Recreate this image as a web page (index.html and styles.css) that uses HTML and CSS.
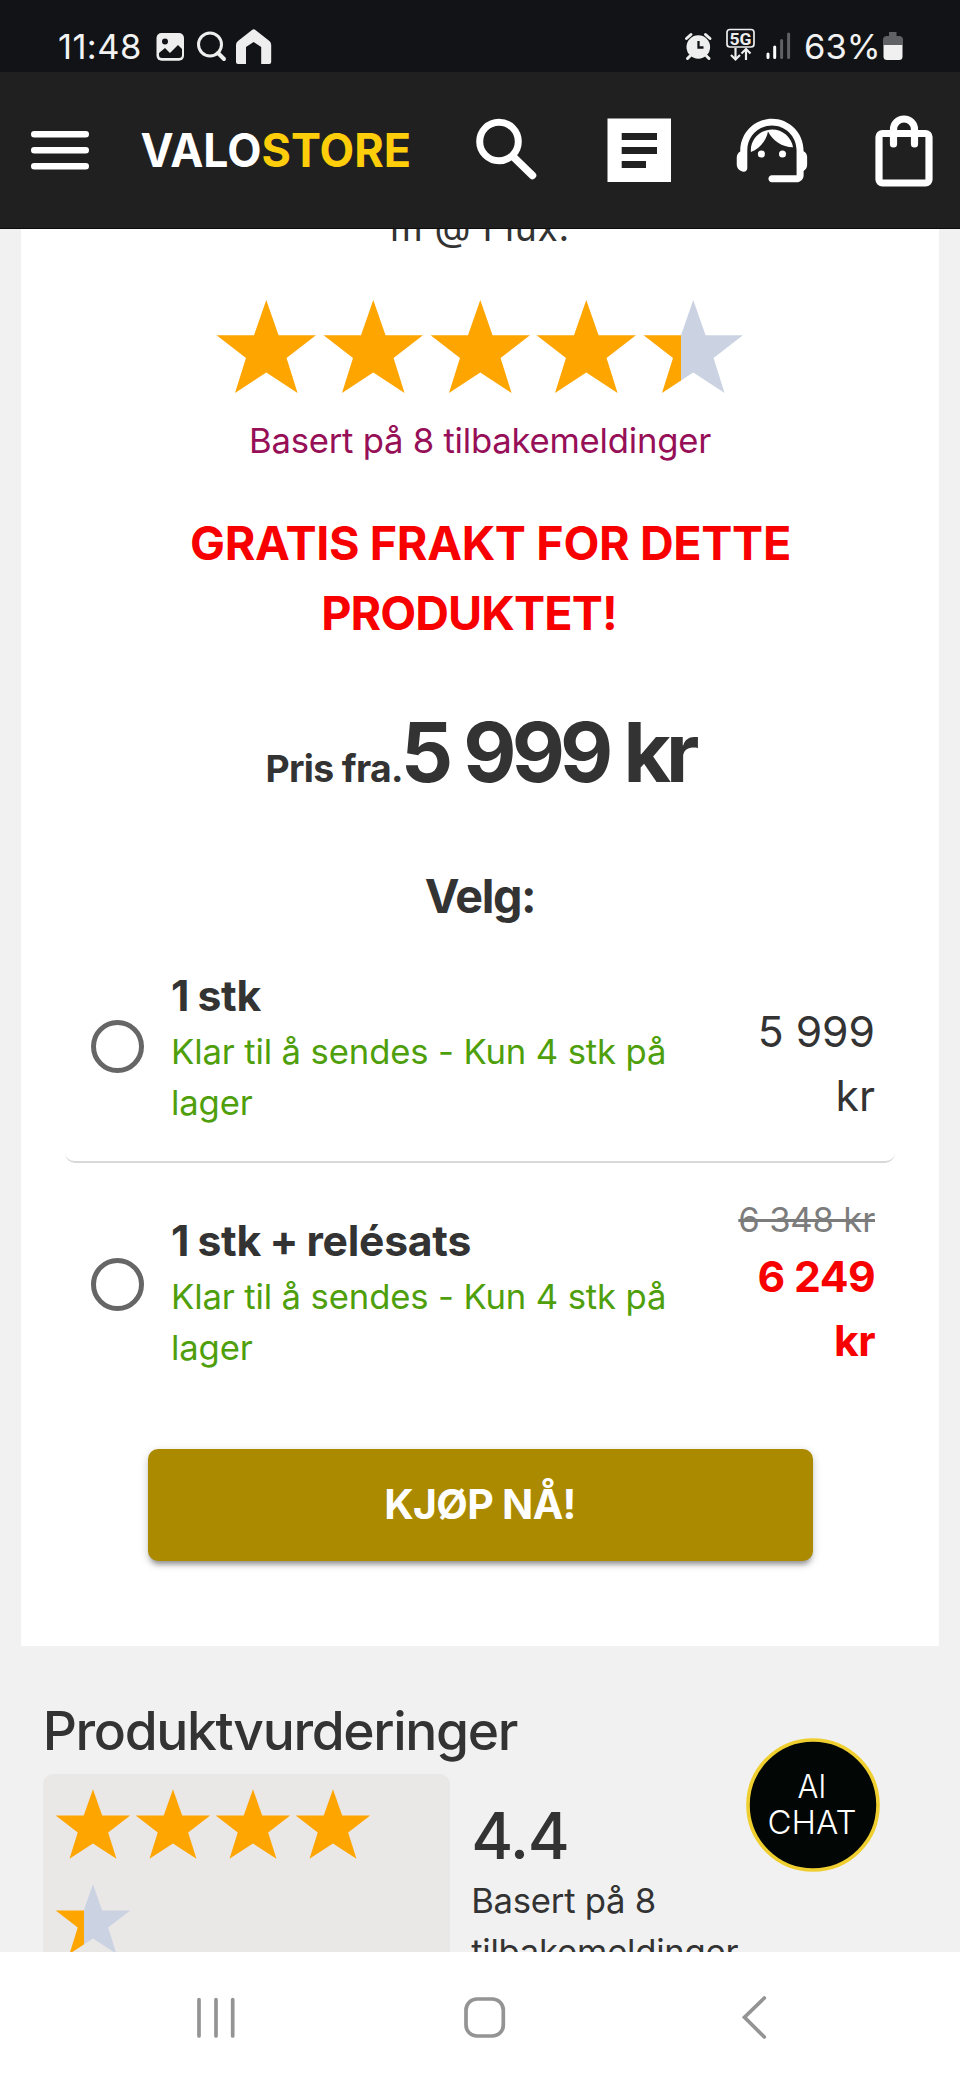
FILE: index.html
```html
<!DOCTYPE html>
<html lang="no">
<head>
<meta charset="utf-8">
<title>Valostore</title>
<link rel="stylesheet" href="styles.css">
</head>
<body>
<svg width="0" height="0" class="defs">
  <defs>
    <path id="star" d="M53.3 0L65.6 35.3H103L73.6 58L84.6 93L53.3 72.5L22 93L33 58L3.6 35.3H41z"/>
    <linearGradient id="partial" gradientUnits="userSpaceOnUse" x1="0" y1="0" x2="106.7" y2="0">
      <stop offset=".385" stop-color="#ffa500"/><stop offset=".385" stop-color="#cbd3e3"/>
    </linearGradient>
  </defs>
</svg>
<div class="screen">
  <div class="status">
    <span class="clock">11:48</span>
    <svg class="status-left" width="120" height="72" viewBox="154 0 120 72">
      <rect x="156.500" y="33" width="27.500" height="27.700" rx="5" fill="#eee"/>
      <circle cx="165" cy="41.500" r="3" fill="#111317"/>
      <path d="M159 53l6-5 5 5 8-8 4 4v6q0 3-3 3h-17q-3 0-3-3z" fill="#111317"/>
      <circle cx="210" cy="44.500" r="11.500" fill="none" stroke="#eee" stroke-width="3"/>
      <path d="M218 53l6 6" stroke="#eee" stroke-width="4" stroke-linecap="round"/>
      <path d="M238 41l14-11q1.700-1.300 3.400 0l14 11q1.800 1.500 1.800 4v17q0 2-2 2h-8V47l-7.600-5-7.600 5v17h-8q-2 0-2-2V45q0-2.500 2-4z" fill="#eee"/>
    </svg>
    <svg class="status-right" width="115" height="72" viewBox="680 0 115 72">
      <circle cx="698.300" cy="47" r="11.800" fill="#eee"/>
      <path d="M686.500 38.500l4.500-4M710 38.500l-4.500-4M690 56l-2.500 2.500M706.500 56l2.500 2.500" stroke="#eee" stroke-width="3" stroke-linecap="round"/>
      <path d="M698.500 41v6.500h5" fill="none" stroke="#111317" stroke-width="2.300"/>
      <rect x="727" y="29.500" width="27" height="17.500" rx="3" fill="none" stroke="#eee" stroke-width="1.700"/>
      <text x="740.500" y="44.500" class="net" text-anchor="middle" textLength="22" lengthAdjust="spacingAndGlyphs">5G</text>
      <path d="M735.500 48v11.500m-4.500-4.500l4.500 4.500 4.500-4.500M746 60V49m-4.500 4.500L746 49l4.500 4.500" fill="none" stroke="#eee" stroke-width="2.200"/>
      <path d="M768 54v3.500M774.700 47v10.500" stroke="#fff" stroke-width="3" stroke-linecap="round"/>
      <path d="M781.600 40.500v17M788.600 34v23.500" stroke="#606164" stroke-width="3" stroke-linecap="round"/>
    </svg>
    <span class="percent">63%</span>
    <svg class="battery" width="20" height="72" viewBox="883 0 20 72">
      <path d="M889 32h7.500v4h2.500q4 0 4 4v5h-20v-5q0-4 4-4h2z" fill="#606164"/>
      <path d="M883.500 45h19v11.500q0 3.500-3.500 3.500h-12q-3.500 0-3.500-3.500z" fill="#f0f0f0"/>
    </svg>
  </div>
  <div class="header">
    <svg class="menu" width="58" height="157" viewBox="31 72 58 157"><path d="M34.300 134.300h51.400M34.300 150.200h51.400M34.300 166.200h51.400" stroke="#fff" stroke-width="6.600" stroke-linecap="round"/></svg>
    <svg class="logo" width="272" height="157" viewBox="140 72 272 157">
      <text x="140.500" y="167" textLength="121" lengthAdjust="spacingAndGlyphs" fill="#fff">VALO</text>
      <text x="261.500" y="167" textLength="149.500" lengthAdjust="spacingAndGlyphs" fill="#ffce0a">STORE</text>
    </svg>
    <svg class="search" width="62" height="157" viewBox="475 72 62 157" fill="none" stroke="#fff"><circle cx="499" cy="141.500" r="19.300" stroke-width="7"/><path d="M513.500 157l19 18.500" stroke-width="7.500" stroke-linecap="round"/></svg>
    <svg class="doc" width="64" height="157" viewBox="607 72 64 157"><path fill="#fff" d="M607.500 118.500h63.500v63.500h-63.500z"/><path fill="#202020" d="M621.700 133h35.300v7h-35.300zM621.700 147h35.300v7h-35.300zM621.700 161h24.300v7h-24.300z"/></svg>
    <svg class="agent" width="72" height="157" viewBox="736 72 72 157">
      <g transform="translate(729.700 108.300) scale(3.520)" fill="#fff">
        <path d="M21 12.220C21 6.730 16.740 3 12 3c-4.690 0-9 3.650-9 9.280-.6.34-1 .98-1 1.720v2c0 1.100.9 2 2 2 .55 0 1-.45 1-1v-5.100c0-3.870 3.130-7 7-7s7 3.130 7 7V19h-7c-.55 0-1 .45-1 1s.45 1 1 1h7c1.100 0 2-.9 2-2v-1.220c.59-.31 1-.92 1-1.640v-2.300c0-.7-.41-1.310-1-1.620z"/>
        <circle cx="9" cy="13" r="1"/><circle cx="15" cy="13" r="1"/>
        <path d="M18 11.030C17.520 8.180 15.040 6 12.050 6c-3.030 0-6.290 2.510-6.030 6.450 2.470-1.010 4.330-3.210 4.860-5.890 1.310 2.630 4 4.440 7.120 4.470z"/>
      </g>
    </svg>
    <svg class="bag" width="58" height="157" viewBox="875 72 58 157" fill="none" stroke="#fff" stroke-width="7.200"><rect x="879" y="133.500" width="50" height="49.500" rx="3.500"/><path d="M893.500 144v-14.500a10.500 10.500 0 0 1 21 0V144" stroke-linecap="round"/></svg>
  </div>
  <div class="content">
    <div class="card">
      <div class="flux">m @ Flux.</div>
      <div class="stars">
        <svg viewBox="0 0 106.700 93"><use href="#star"/></svg><svg viewBox="0 0 106.700 93"><use href="#star"/></svg><svg viewBox="0 0 106.700 93"><use href="#star"/></svg><svg viewBox="0 0 106.700 93"><use href="#star"/></svg><svg viewBox="0 0 106.700 93" class="part"><use href="#star"/></svg>
      </div>
      <div class="based">Basert på 8 tilbakemeldinger</div>
      <div class="promo"><div class="promo-first">GRATIS FRAKT FOR DETTE</div><div class="promo-second">PRODUKTET!</div></div>
      <div class="price"><span class="from">Pris fra.</span><span class="amount">5 999 kr</span></div>
      <div class="choose">Velg:</div>
      <div class="option first">
        <span class="radio"></span>
        <div class="info"><div class="name">1 stk</div><div class="stock">Klar til å sendes - Kun 4 stk på lager</div></div>
        <div class="cost">5 999<br>kr</div>
      </div>
      <div class="option second">
        <span class="radio"></span>
        <div class="info"><div class="name">1 stk + relésats</div><div class="stock">Klar til å sendes - Kun 4 stk på lager</div></div>
        <div class="cost sale"><s>6 348 kr</s>6 249<br>kr</div>
      </div>
      <div class="buy">KJØP NÅ!</div>
    </div>
    <div class="reviews">
      <div class="title">Produktvurderinger</div>
      <div class="summary">
        <div class="box">
          <svg viewBox="0 0 106.700 93"><use href="#star"/></svg><svg viewBox="0 0 106.700 93"><use href="#star"/></svg><svg viewBox="0 0 106.700 93"><use href="#star"/></svg><svg viewBox="0 0 106.700 93"><use href="#star"/></svg><svg viewBox="0 0 106.700 93" class="part"><use href="#star"/></svg>
        </div>
        <div class="score"><div class="number">4.4</div><div class="count">Basert på 8<br>tilbakemeldinger</div></div>
      </div>
    </div>
    <div class="chat">
      <svg width="134" height="134" viewBox="746 1738 134 134">
        <circle cx="813" cy="1805" r="65" fill="#020706" stroke="#efce30" stroke-width="3.600"/>
        <text x="797.500" y="1797.500" textLength="29" lengthAdjust="spacingAndGlyphs">AI</text>
        <text x="767.500" y="1833.500" textLength="89" lengthAdjust="spacingAndGlyphs">CHAT</text>
      </svg>
    </div>
  </div>
  <div class="nav">
    <svg class="recents" width="42" height="128" viewBox="195 1952 42 128"><path d="M199 1999.500v36.500M216 1999.500v36.500M232.700 1999.500v36.500"/></svg>
    <svg class="home" width="44" height="128" viewBox="463 1952 44 128"><rect x="466" y="1999" width="37.300" height="37" rx="11"/></svg>
    <svg class="back" width="28" height="128" viewBox="740 1952 28 128"><path d="M764.300 1998l-19.800 19.300 19.800 19.700"/></svg>
  </div>
</div>
</body>
</html>
```
FILE: styles.css
```css
* { box-sizing: border-box; }
body { margin: 0; font-family: Inter, sans-serif; color: #333; }
svg { display: block; flex: none; }
.defs { position: absolute; }
.screen { width: 960px; height: 2080px; display: flex; flex-direction: column; overflow: hidden; background: #f1f1f1; }

.status { flex: none; height: 72px; background: #111317; color: #f2f2f2; display: flex; font-size: 34.5px; line-height: 93px; padding-left: 58px; }
.clock { width: 96px; letter-spacing: 0.4px; }
.status-right { margin-left: 406px; }
.percent { margin-left: 9px; width: 79px; }
.net { font: 700 16.500px Roboto, sans-serif; fill: #eee; }

.header { flex: none; height: 157px; background: #202020; display: flex; padding-left: 31px; border-bottom: 1px solid #0c0c0c; }
.logo { margin-left: 51px; overflow: visible; }
.logo text { font-weight: 700; font-size: 46px; }
.search { margin-left: 63px; }
.doc { margin-left: 70px; }
.agent { margin-left: 65px; }
.bag { margin-left: 67px; }

.content { flex: 1; min-height: 0; overflow: hidden; position: relative; }
.card { margin: 0 21.300px; height: 1417px; background: #fff; text-align: center; display: flow-root; }
.flux { margin-top: -29px; font-size: 37.330px; line-height: 56px; letter-spacing: 0.650px; }
.stars { display: flex; justify-content: center; margin-top: 44px; }
.stars svg { width: 106.670px; height: 93px; fill: #ffa500; }
.stars .part, .box .part { fill: url(#partial); }
.based { margin-top: 22px; font-size: 34.670px; line-height: 50px; letter-spacing: -0.230px; color: #960f57; }
.promo { margin-top: 43px; color: #f80000; font-weight: 700; font-size: 46.670px; line-height: 70px; }
.promo-first { padding-left: 21px; letter-spacing: -0.350px; }
.promo-second { padding-right: 22px; letter-spacing: -0.900px; }
.price { margin-top: 55px; height: 99px; line-height: 100px; font-weight: 700; white-space: nowrap; }
.from { font-size: 37.330px; letter-spacing: -0.650px; }
.amount { font-size: 82px; letter-spacing: -4.900px; word-spacing: 0.500px; margin-left: -2px; }
.choose { margin-top: 64px; font-size: 46.670px; line-height: 60px; font-weight: 700; letter-spacing: -1.400px; }
.option { display: flex; align-items: flex-end; text-align: left; margin: 0 43.700px; padding-left: 26px; padding-right: 20px; }
.first { height: 237px; padding-bottom: 33.500px; border-bottom: 2px solid #d8d8d8; border-radius: 0 0 10px 10px; }
.second { height: 210px; }
.radio { width: 53px; height: 53px; border: 5.300px solid #666; border-radius: 50%; margin-bottom: 55px; }
.second .radio { margin-bottom: 62px; }
.info { width: 520px; margin-left: 27px; }
.name { font-weight: 700; font-size: 42.670px; line-height: 60px; letter-spacing: -0.250px; word-spacing: -1.500px; }
.stock { font-size: 34.670px; line-height: 51px; letter-spacing: -0.130px; color: #4f9f0c; }
.cost { margin-left: auto; text-align: right; font-size: 42.670px; line-height: 64px; white-space: nowrap; }
.cost s { display: block; font-size: 34.670px; line-height: 51px; color: #7c7c7c; font-weight: 400; letter-spacing: -0.200px; }
.sale { color: #f80000; font-weight: 700; letter-spacing: -0.600px; }
.buy { width: 665px; height: 112px; margin: 76px auto 0; border-radius: 10px; background: #ab8a00; color: #fff; font-weight: 700; font-size: 41px; line-height: 111px; letter-spacing: -0.700px; box-shadow: 0 6px 5px -3px rgba(0,0,0,.3), 0 3px 8px rgba(0,0,0,.22); }

.reviews { padding: 51.500px 42.700px 0; }
.title { font-weight: 500; font-size: 53.330px; line-height: 66px; letter-spacing: -1.350px; }
.summary { display: flex; margin-top: 10.500px; }
.box { width: 407px; height: 260px; background: #eae7e7; border-radius: 10px; padding: 15px 70px 0 10px; display: flex; flex-wrap: wrap; align-content: flex-start; row-gap: 25px; }
.box svg { width: 80px; height: 70px; fill: #ffa500; }
.score { margin-left: 21.500px; padding-top: 22px; }
.number { font-weight: 500; font-size: 64px; line-height: 79px; letter-spacing: -1.300px; }
.count { font-size: 34.670px; line-height: 51px; white-space: nowrap; letter-spacing: -0.250px; }
.chat { position: absolute; left: 746px; top: 1509px; }
.chat text { font-size: 33px; font-weight: 300; fill: #fff; }

.nav { flex: none; height: 128px; background: #fff; display: flex; padding-left: 195px; }
.nav svg { fill: none; stroke: #949494; stroke-width: 3.700; stroke-linecap: round; }
.home { margin-left: 226px; }
.back { margin-left: 233px; }
```
